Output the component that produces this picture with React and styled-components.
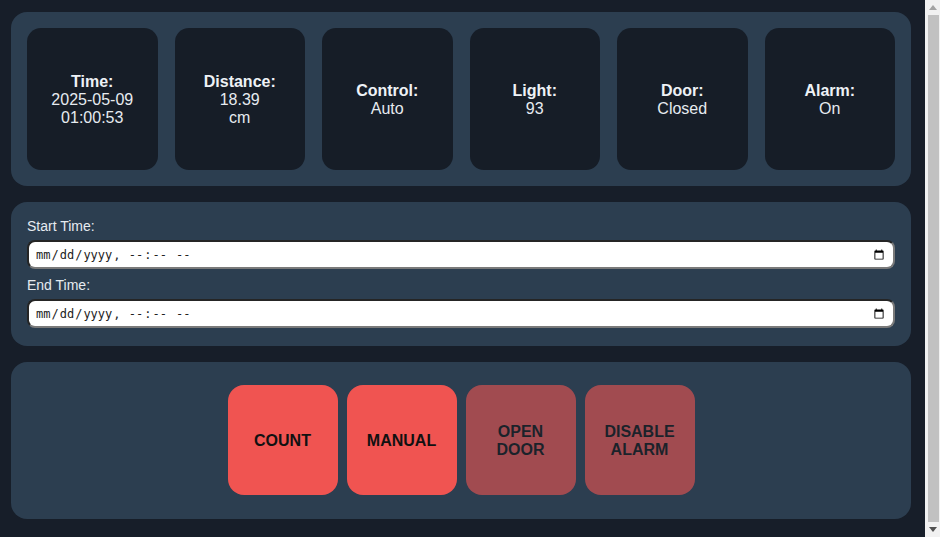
import React from "react";
import styled, { createGlobalStyle } from "styled-components";

const Global = createGlobalStyle`
  html, body { margin: 0; padding: 0; }
  body {
    background: #171e29;
    font-family: "Liberation Sans", Arial, sans-serif;
    color: #e6ebf0;
  }
`;

const Page = styled.div`
  display: flex;
  flex-direction: column;
  gap: 16px;
  padding: 12px 29px 30px 11px;
`;

const Panel = styled.section`
  background: #2c3e50;
  border-radius: 16px;
  padding: ${(p) => p.$pad || "16px"};
`;

const CardRow = styled.div`
  display: grid;
  grid-template-columns: repeat(6, 1fr);
  gap: 17px;
`;

const Card = styled.div`
  box-sizing: border-box;
  background: #161d27;
  border-radius: 14px;
  height: 142px;
  padding-top: 2px;
  display: flex;
  flex-direction: column;
  align-items: center;
  justify-content: center;
  text-align: center;
  font-size: 16px;
  line-height: 18px;
  color: #e6ebf0;
`;

const Label = styled.strong`
  font-weight: bold;
  color: #eef2f6;
`;

const Value = styled.span`
  font-weight: normal;
`;

const FieldLabel = styled.label`
  display: block;
  font-size: 14px;
  line-height: 16px;
  color: #e6ebf0;
  margin-bottom: 6px;
`;

const DateInput = styled.input`
  display: block;
  box-sizing: border-box;
  width: 100%;
  height: 29px;
  margin: 0 0 ${(p) => p.$mb || "0"};
  padding: 2px 6px;
  border: 2px inset #7a7a7a;
  border-radius: 8px;
  background: #fff;
  font-family: "DejaVu Sans Mono", monospace;
  font-size: 12px;
  color: #222;
`;

const ButtonRow = styled.div`
  display: flex;
  justify-content: center;
  gap: 9px;
`;

const ActionButton = styled.button`
  width: 110px;
  height: 110px;
  border: none;
  border-radius: 16px;
  background: #f05451;
  opacity: ${(p) => (p.disabled ? 0.6 : 1)};
  font-family: "Liberation Sans", Arial, sans-serif;
  font-weight: bold;
  font-size: 16px;
  line-height: 18px;
  color: #111;
  padding: 2px 8px 0;
  cursor: pointer;
`;

const ScrollTrack = styled.div`
  position: fixed;
  top: 0;
  right: 0;
  bottom: 0;
  width: 15px;
  background: #f1f1f1;
  display: flex;
  flex-direction: column;
  align-items: center;
`;

const ScrollArrow = styled.div`
  height: 15px;
  width: 15px;
  display: flex;
  align-items: center;
  justify-content: center;
`;

const ScrollThumb = styled.div`
  flex: 1;
  width: 11px;
  margin: 0 0 0 2px;
  background: #c1c1c1;
`;

const stats = [
  { label: "Time:", lines: ["2025-05-09", "01:00:53"] },
  { label: "Distance:", lines: ["18.39", "cm"] },
  { label: "Control:", lines: ["Auto"] },
  { label: "Light:", lines: ["93"] },
  { label: "Door:", lines: ["Closed"] },
  { label: "Alarm:", lines: ["On"] },
];

export default function App() {
  return (
    <>
      <Global />
      <Page>
        <Panel>
          <CardRow>
            {stats.map((s) => (
              <Card key={s.label}>
                <Label>{s.label}</Label>
                {s.lines.map((l) => (
                  <Value key={l}>{l}</Value>
                ))}
              </Card>
            ))}
          </CardRow>
        </Panel>
        <Panel $pad="16px 16px 18px">
          <FieldLabel htmlFor="start">Start Time:</FieldLabel>
          <DateInput id="start" type="datetime-local" $mb="8px" />
          <FieldLabel htmlFor="end">End Time:</FieldLabel>
          <DateInput id="end" type="datetime-local" />
        </Panel>
        <Panel $pad="23px 16px 24px">
          <ButtonRow>
            <ActionButton>COUNT</ActionButton>
            <ActionButton>MANUAL</ActionButton>
            <ActionButton disabled>OPEN DOOR</ActionButton>
            <ActionButton disabled>DISABLE ALARM</ActionButton>
          </ButtonRow>
        </Panel>
      </Page>
      <ScrollTrack aria-hidden="true">
        <ScrollArrow>
          <svg width="8" height="5" viewBox="0 0 8 5"><path d="M4 0 L8 5 L0 5 Z" fill="#a3a3a3" /></svg>
        </ScrollArrow>
        <ScrollThumb />
        <ScrollArrow>
          <svg width="8" height="5" viewBox="0 0 8 5"><path d="M0 0 L8 0 L4 5 Z" fill="#505050" /></svg>
        </ScrollArrow>
      </ScrollTrack>
    </>
  );
}
